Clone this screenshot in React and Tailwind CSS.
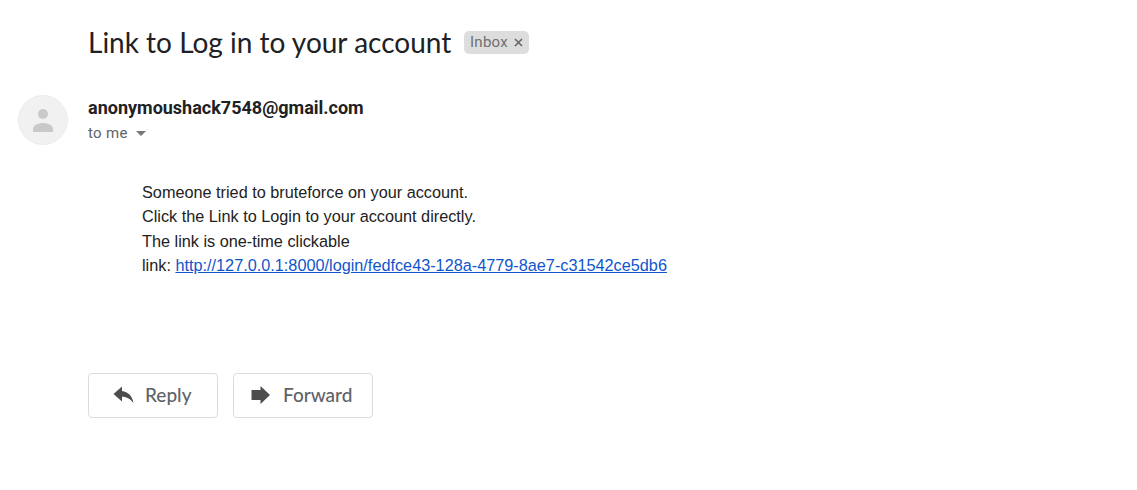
export default function App() {
    return (
        <div className="h-[490px] w-[1137px] overflow-hidden bg-white font-['Roboto',sans-serif]">
            <div className="flex items-center pt-[24px] pl-[88px]">
                <h1 className="w-[376px] text-[28px] leading-9 font-['Lato',sans-serif] font-normal whitespace-nowrap text-[#202124]">Link to Log in to your account</h1>
                <span className="flex h-[23px] w-[65px] items-center justify-center gap-[6px] rounded-[5px] bg-[#dddddd] text-[15px] tracking-[0.3px] text-[#707070]">
                    Inbox
                    <svg width="9" height="9" viewBox="0 0 9 9" stroke="#666666" strokeWidth="1.6">
                        <path d="M1 1l7 7M8 1l-7 7" />
                    </svg>
                </span>
            </div>

            <div className="mt-[35px] flex pl-[18px]">
                <div className="flex size-[50px] items-center justify-center rounded-full border border-[#ececec] bg-[#f1f1f1]">
                    <svg width="24" height="24" viewBox="0 0 24 24" fill="#c9c9c9">
                        <circle cx="12" cy="6" r="5" />
                        <path d="M2 24v-3c0-4 6-6 10-6s10 2 10 6v3z" />
                    </svg>
                </div>
                <div className="ml-5 pt-[2px]">
                    <div className="text-[18px] leading-[22px] font-bold text-[#202124]">anonymoushack7548@gmail.com</div>
                    <div className="mt-[4px] flex items-center text-[15px] leading-5 tracking-[0.3px] text-[#5f6368]">
                        to me
                        <span className="mt-[1px] ml-2 size-0 border-x-[5px] border-t-[5px] border-x-transparent border-t-[#777777]"></span>
                    </div>
                </div>
            </div>

            <div className="mt-[35px] pl-[142px] font-['Liberation_Sans',sans-serif] text-[16.250px] leading-[24.4px] text-[#222222]">
                <div>Someone tried to bruteforce on your account.</div>
                <div>Click the Link to Login to your account directly.</div>
                <div>The link is one-time clickable</div>
                <div>
                    link:{' '}
                    <a href="#" className="text-[#1155cc] underline">
                        http://127.0.0.1:8000/login/fedfce43-128a-4779-8ae7-c31542ce5db6
                    </a>
                </div>
            </div>

            <div className="mt-[95px] flex gap-[15px] pl-[88px]">
                <button className="flex h-[45px] w-[130px] items-center rounded-[4px] border border-[#dadce0] pl-[23px] font-['Lato',sans-serif] text-[19px] font-medium text-[#5f6368]">
                    <svg width="22" height="18" viewBox="0 0 22 18" fill="#4d4d4d">
                        <path d="M10 0.500v4.500C16 5.800 20 9.500 21.500 17c-3-4-6.500-6.300-11.500-6.300V15.500L1.500 8z" />
                    </svg>
                    <span className="ml-[11px]">Reply</span>
                </button>
                <button className="flex h-[45px] w-[140px] items-center rounded-[4px] border border-[#dadce0] pl-[17px] font-['Lato',sans-serif] text-[19px] font-medium text-[#5f6368]">
                    <svg width="19" height="18" viewBox="0 0 19 18" fill="#4d4d4d">
                        <path d="M9.500 0l9.500 9-9.500 9v-4H0.500V4h9z" />
                    </svg>
                    <span className="ml-[13px]">Forward</span>
                </button>
            </div>
        </div>
    );
}
